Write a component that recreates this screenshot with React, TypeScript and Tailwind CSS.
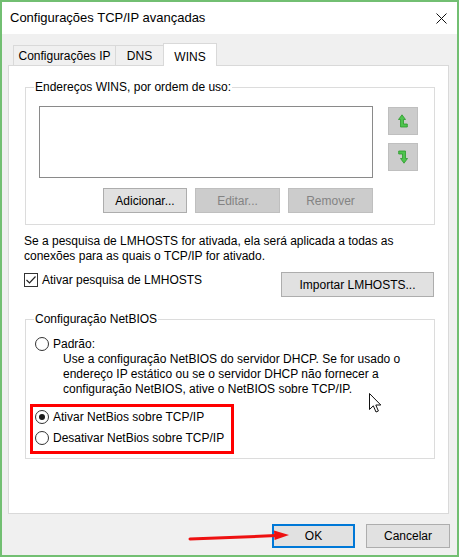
import React from 'react';

type BtnProps = {
  children?: React.ReactNode;
  className?: string;
  disabled?: boolean;
  primary?: boolean;
};

// Win10 style push button
function Btn({ children, className = '', disabled = false, primary = false }: BtnProps) {
  const tone = disabled
    ? 'border border-[#bfbfbf] bg-[#cccccc] text-[#838383]'
    : primary
      ? 'border-2 border-[#0078d7] bg-[#e1e1e1] text-black'
      : 'border border-[#adadad] bg-[#e1e1e1] text-black';
  return (
    <div className={`flex items-center justify-center shrink-0 ${tone} ${className}`}>
      {children}
    </div>
  );
}

function Radio({ checked = false }: { checked?: boolean }) {
  return (
    <span className="flex items-center justify-center w-[14px] h-[14px] rounded-full border border-[#333333] bg-white shrink-0">
      {checked && <span className="w-[6px] h-[6px] rounded-full bg-[#1a1a1a]" />}
    </span>
  );
}

function Legend({ children }: { children: React.ReactNode }) {
  return (
    <div className="-mt-[8px] ml-[8px] px-[1px] w-fit h-[14px] leading-[14px] bg-white">{children}</div>
  );
}

const UpIcon = () => (
  <svg width="10" height="14" viewBox="0 0 10 14">
    <path
      d="M0.5 5.5 L4 0.8 L7.5 5.5 L5.5 5.5 L5.5 10 L9.3 10 L9.3 13 L2.5 13 L2.5 5.5 Z"
      fill="#4fc44f"
      stroke="#2c9a2c"
      strokeWidth="0.8"
      strokeLinejoin="round"
    />
  </svg>
);

const DownIcon = () => (
  <svg width="10" height="14" viewBox="0 0 10 14">
    <path
      d="M0.7 1 L7.5 1 L7.5 8.5 L9.5 8.5 L6 13.2 L2.5 8.5 L4.5 8.5 L4.5 4 L0.7 4 Z"
      fill="#4fc44f"
      stroke="#2c9a2c"
      strokeWidth="0.8"
      strokeLinejoin="round"
    />
  </svg>
);

export default function App() {
  return (
    <div className="relative flex flex-col w-[459px] h-[557px] border-2 border-[#72bf72] bg-[#f0f0f0] overflow-hidden font-['Liberation_Sans',Arial,sans-serif] text-[12px] text-black">
      {/* Title bar */}
      <div className="flex items-center justify-between h-[32px] pl-[8px] pr-[10px] bg-white shrink-0">
        <span className="text-[13px]">Configurações TCP/IP avançadas</span>
        <svg width="11" height="11" viewBox="0 0 11 11">
          <path d="M0.5 0.5 L10.5 10.5 M10.5 0.5 L0.5 10.5" stroke="#111" strokeWidth="1" />
        </svg>
      </div>

      {/* Tabs */}
      <div className="flex items-end h-[23px] mt-[8px] ml-[11px] shrink-0">
        <div className="flex items-center justify-center w-[102px] h-[20px] border-l border-t border-[#d9d9d9]">
          Configurações IP
        </div>
        <div className="flex items-center justify-center w-[48px] h-[20px] border-l border-t border-[#d9d9d9]">
          DNS
        </div>
        <div className="relative z-10 flex justify-center w-[54px] h-[23px] -mb-px pt-[4px] border-l border-t border-r border-[#d9d9d9] bg-white">
          WINS
        </div>
      </div>

      {/* Tab panel */}
      <div className="flex flex-col ml-[6px] w-[441px] h-[449px] border border-[#d9d9d9] bg-white shrink-0">
        {/* WINS addresses */}
        <div className="flex flex-col ml-[16px] mt-[21px] w-[410px] h-[138px] border border-[#dcdcdc]">
          <Legend>Endereços WINS, por ordem de uso:</Legend>
          <div className="flex ml-[13px] mt-[12px]">
            <div className="flex flex-col w-[334px]">
              <div className="h-[72px] border border-[#8a8a8a] bg-white" />
              <div className="flex justify-end gap-[8px] mt-[10px]">
                <Btn className="w-[84px] h-[25px]">Adicionar...</Btn>
                <Btn disabled className="w-[85px] h-[25px]">Editar...</Btn>
                <Btn disabled className="w-[85px] h-[25px]">Remover</Btn>
              </div>
            </div>
            <div className="flex flex-col gap-[8px] ml-[15px] mt-[1px]">
              <Btn disabled className="w-[30px] h-[28px]"><UpIcon /></Btn>
              <Btn disabled className="w-[30px] h-[28px]"><DownIcon /></Btn>
            </div>
          </div>
        </div>

        <p className="ml-[15px] mt-[9px] leading-[15px]">
          Se a pesquisa de LMHOSTS for ativada, ela será aplicada a todas as
          <br />
          conexões para as quais o TCP/IP for ativado.
        </p>

        <div className="flex items-start w-[410px] ml-[15px] mt-[8px]">
          <div className="flex items-center gap-[4px] h-[14px] mt-[1px]">
            <span className="flex items-center justify-center w-[14px] h-[14px] border border-[#333333] bg-white">
              <svg width="12" height="12" viewBox="0 0 12 12">
                <path d="M1.5 6 L4.5 9 L10.5 2.5" fill="none" stroke="#222" strokeWidth="1.2" />
              </svg>
            </span>
            <span>Ativar pesquisa de LMHOSTS</span>
          </div>
          <Btn className="ml-auto w-[153px] h-[25px]">Importar LMHOSTS...</Btn>
        </div>

        {/* NetBIOS */}
        <div className="flex flex-col ml-[16px] mt-[22px] w-[410px] h-[140px] border border-[#dcdcdc]">
          <Legend>Configuração NetBIOS</Legend>
          <div className="flex items-center gap-[4px] h-[15px] ml-[9px] mt-[10px]">
            <Radio />
            <span>Padrão:</span>
          </div>
          <p className="ml-[37px] mt-[1px] leading-[15px]">
            Use a configuração NetBIOS do servidor DHCP. Se for usado o
            <br />
            endereço IP estático ou se o servidor DHCP não fornecer a
            <br />
            configuração NetBIOS, ative o NetBIOS sobre TCP/IP.
          </p>
          <div className="flex flex-col gap-[6px] ml-[4px] mt-[7px] w-[204px] pt-[2px] pb-[6px] pl-[2px] border-[3px] border-[#ff0000]">
            <div className="flex items-center gap-[4px] h-[15px]">
              <Radio checked />
              <span>Ativar NetBios sobre TCP/IP</span>
            </div>
            <div className="flex items-center gap-[4px] h-[15px]">
              <Radio />
              <span>Desativar NetBios sobre TCP/IP</span>
            </div>
          </div>
        </div>
      </div>

      {/* Dialog buttons */}
      <div className="flex justify-end gap-[11px] mt-[10px] pr-[7px]">
        <Btn primary className="w-[83px] h-[24px]">OK</Btn>
        <Btn className="w-[84px] h-[24px]">Cancelar</Btn>
      </div>

      {/* annotation arrow */}
      <svg className="absolute left-[186px] top-[524px]" width="104" height="20" viewBox="0 0 104 20">
        <path d="M2 13 L88 9.6" stroke="#ee1111" strokeWidth="3" strokeLinecap="round" />
        <path d="M101 9 L86 4.6 L86.6 14 Z" fill="#ee1111" />
      </svg>

      {/* mouse cursor */}
      <svg className="absolute left-[367px] top-[391px]" width="14" height="21" viewBox="0 0 14 21">
        <path
          d="M0.5 0.5 L0.5 16.5 L4.3 12.8 L7 19 L9.4 18 L6.8 12 L11.8 12 Z"
          fill="#fff"
          stroke="#111"
          strokeWidth="1"
          strokeLinejoin="round"
        />
      </svg>
    </div>
  );
}
